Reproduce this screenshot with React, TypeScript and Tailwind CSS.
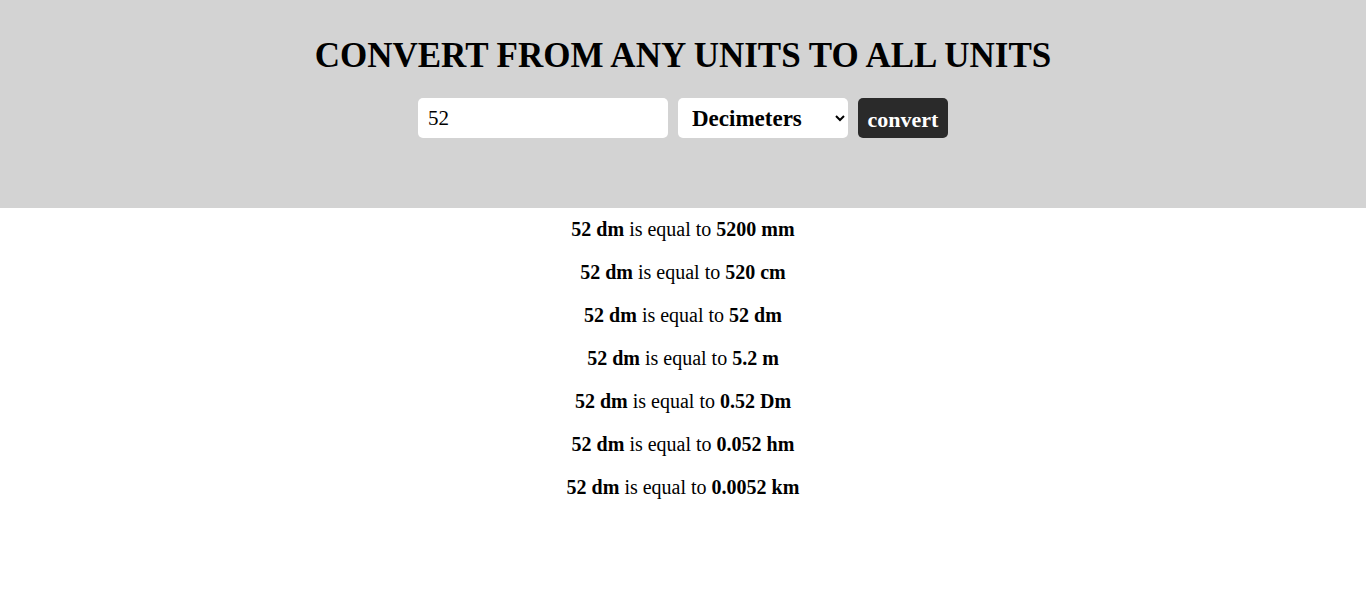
const results = [
  { value: "5200", unit: "mm" },
  { value: "520", unit: "cm" },
  { value: "52", unit: "dm" },
  { value: "5.2", unit: "m" },
  { value: "0.52", unit: "Dm" },
  { value: "0.052", unit: "hm" },
  { value: "0.0052", unit: "km" },
];

export default function App() {
  return (
    <div className="min-h-screen bg-white font-['Liberation_Serif',serif] text-black">
      <header className="flex h-[208px] flex-col items-center bg-[#d3d3d3] pt-[35px]">
        <h1 className="text-[35px] font-bold leading-[42px]">
          CONVERT FROM ANY UNITS TO ALL UNITS
        </h1>
        <div className="mt-[21px] flex gap-[10px]">
          <input
            type="text"
            defaultValue="52"
            className="h-[40px] w-[250px] rounded-[5px] bg-white px-[10px] font-['Liberation_Serif',serif] text-[21px] outline-none"
          />
          <select
            defaultValue="dm"
            className="h-[40px] w-[170px] rounded-[5px] bg-white px-[10px] font-['Liberation_Serif',serif] text-[23px] font-bold outline-none"
          >
            <option value="mm">Millimeters</option>
            <option value="cm">Centimeters</option>
            <option value="dm">Decimeters</option>
            <option value="m">Meters</option>
            <option value="Dm">Decameters</option>
            <option value="hm">Hectometers</option>
            <option value="km">Kilometers</option>
          </select>
          <button className="h-[40px] w-[90px] rounded-[5px] bg-[#2a2a2a] pt-[2px] font-['Liberation_Serif',serif] text-[22px] font-bold text-white">
            convert
          </button>
        </div>
      </header>
      <div className="flex flex-col items-center gap-[16px] pt-[8px] text-[20px] leading-[27px]">
        {results.map((r) => (
          <p key={r.unit}>
            <b>52 dm</b> is equal to{" "}
            <b>
              {r.value} {r.unit}
            </b>
          </p>
        ))}
      </div>
    </div>
  );
}
